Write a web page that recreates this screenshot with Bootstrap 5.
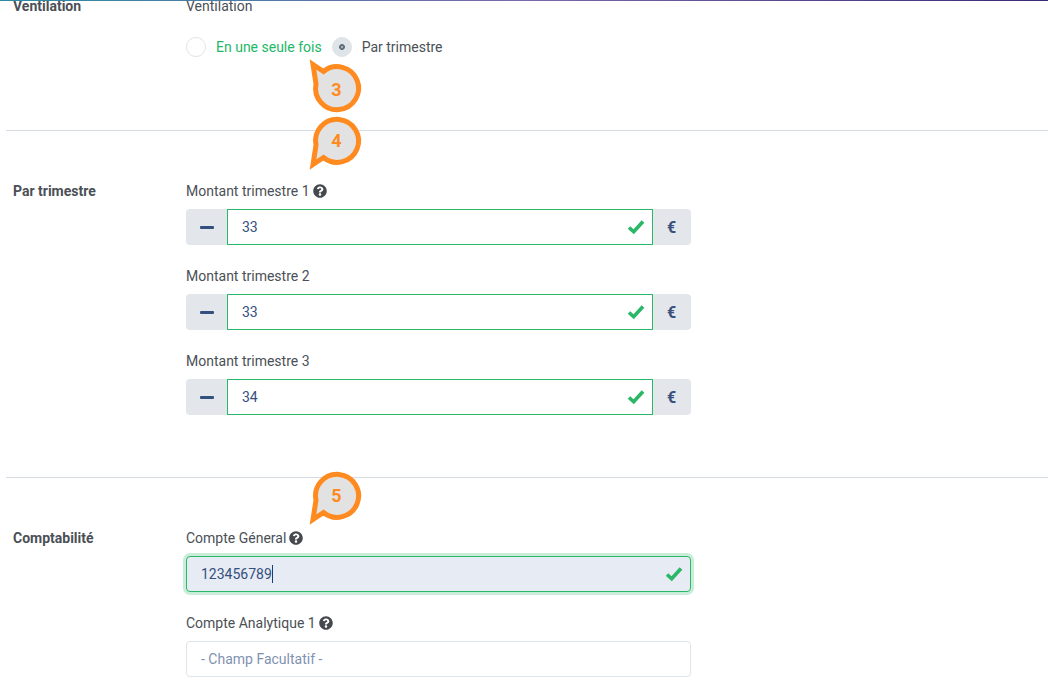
<!doctype html>
<html lang="fr"><head><meta charset="utf-8"><title>Ventilation</title>
<link href="https://cdn.jsdelivr.net/npm/bootstrap@5.3.0/dist/css/bootstrap.min.css" rel="stylesheet">
<style>
html,body{height:680px;overflow:hidden;background:#fff}
body{font-family:Roboto,"Liberation Sans",sans-serif;font-size:14px;color:#4b5056;position:relative}
.topline{height:1px;background:linear-gradient(90deg,#2a8aa0 0,#7a6aa8 50%,#3a2878 100%);position:absolute;left:0;right:0;top:0;z-index:3}
.sheet{padding-left:6px;height:680px;overflow:hidden}
.sect{display:flex;padding-left:7px}
.sect-title{width:173px;flex:none;font-weight:700;line-height:20px;color:#4b5056}
.sect-body{width:505px;flex:none}
.rule{border:0;border-top:1px solid #d5dce3;opacity:1;margin:0}
.s1{height:134px;margin-top:-4px}
.s2{padding-top:50px;height:346px}
.s3{padding-top:50px}
.fld-label{line-height:20px;margin:0 0 8px;display:flex;align-items:center;gap:3px;color:#4b5056}
.qm{width:14px;height:14px;fill:#45494e;flex:none}
.fld{margin-bottom:21px}
.fld .input-group-text{background:#e3e7eb;border:0;justify-content:center;padding:0;height:36px;border-radius:4px}
.minus{width:42px;border-top-right-radius:0!important;border-bottom-right-radius:0!important}
.minus span{display:block;width:14px;height:3px;background:#34507f;border-radius:1px}
.fld .euro{width:39px;font-weight:700;font-size:16px;color:#3d4f7c;padding-top:2px;border-top-left-radius:0!important;border-bottom-left-radius:0!important}
.fld .form-control{height:36px;font-size:14px;color:#34507f;padding:0 14px;font-family:inherit;box-shadow:none}
.fld .form-control.is-valid{border:1px solid #2ab868;background-size:18px 18px;background-position:right 7px center;padding-right:36px;
 background-image:url("data:image/svg+xml,%3Csvg xmlns='http://www.w3.org/2000/svg' viewBox='0 0 18 18'%3E%3Cpath d='M2 9.500l4.700 4.300L16 3.500' fill='none' stroke='%232ab868' stroke-width='3.600'/%3E%3C/svg%3E")}
.input-group .form-control.is-valid{border-radius:0}
.fld .form-control.is-focus{background-color:#e7ebf3;border-radius:4px;box-shadow:0 0 0 3px rgba(42,184,104,.25)}
.fld .form-control.plain{border:1px solid #dde4ea;border-radius:4px}
.fld .form-control.plain::placeholder{color:#7f92b0;opacity:1}
.caret-wrap{position:relative}
.caret-bar{position:absolute;left:86px;top:9px;width:1px;height:18px;background:#1c3d73}
.radios{display:flex;align-items:center;margin-top:20px}
.radios .form-check-input{width:20px;height:20px;margin:0;flex:none;border:1px solid #dde4ea;background-color:#fff}
.radios .form-check-input:checked{background-color:#dfe4e8;border-color:#dfe4e8;background-image:radial-gradient(circle,#a5afb9 0,#a5afb9 .8px,#5f6e7e 1.6px,#5f6e7e 2.6px,transparent 3.2px)}
.radios label{line-height:20px;padding-top:1px}
.lab-on{color:#22b866;margin:0 10px;}
.lab-off{margin-left:10px}
.mark-pin{position:absolute;left:300px;width:66px;height:64px;z-index:2}
.pin3{top:55px}.pin4{top:110px}.pin5{top:465px}
.mark-pin text{font:700 18px Roboto,"Liberation Sans",sans-serif;fill:#ff8a1f;text-anchor:middle}
</style></head>
<body>
<div class="topline"></div>
<main class="sheet">
 <section class="sect s1">
  <div class="sect-title">Ventilation</div>
  <div class="sect-body">
   <div class="fld-label">Ventilation</div>
   <div class="radios">
    <input class="form-check-input" type="radio" name="v" id="r1"><label class="lab-on" for="r1">En une seule fois</label>
    <input class="form-check-input" type="radio" name="v" id="r2" checked><label class="lab-off" for="r2">Par trimestre</label>
   </div>
  </div>
 </section>
 <hr class="rule">
 <section class="sect s2">
  <div class="sect-title">Par trimestre</div>
  <div class="sect-body">
   <div class="fld">
    <div class="fld-label">Montant trimestre 1 <svg class="qm" viewBox="0 0 512 512"><use href="#q"/></svg></div>
    <div class="input-group"><span class="input-group-text minus"><span></span></span><input class="form-control is-valid" value="33"><span class="input-group-text euro">€</span></div>
   </div>
   <div class="fld">
    <div class="fld-label">Montant trimestre 2</div>
    <div class="input-group"><span class="input-group-text minus"><span></span></span><input class="form-control is-valid" value="33"><span class="input-group-text euro">€</span></div>
   </div>
   <div class="fld">
    <div class="fld-label">Montant trimestre 3</div>
    <div class="input-group"><span class="input-group-text minus"><span></span></span><input class="form-control is-valid" value="34"><span class="input-group-text euro">€</span></div>
   </div>
  </div>
 </section>
 <hr class="rule">
 <section class="sect s3">
  <div class="sect-title">Comptabilité</div>
  <div class="sect-body">
   <div class="fld">
    <div class="fld-label">Compte Géneral <svg class="qm" viewBox="0 0 512 512"><use href="#q"/></svg></div>
    <div class="caret-wrap"><input class="form-control is-valid is-focus" value="123456789"><span class="caret-bar"></span></div>
   </div>
   <div class="fld">
    <div class="fld-label">Compte Analytique 1 <svg class="qm" viewBox="0 0 512 512"><use href="#q"/></svg></div>
    <input class="form-control plain" placeholder="- Champ Facultatif -">
   </div>
  </div>
 </section>
</main>
<svg width="0" height="0" class="position-absolute"><defs>
 <path id="q" d="M504 256c0 136.997-111.043 248-248 248S8 392.997 8 256C8 119.083 119.043 8 256 8s248 111.083 248 248zM262.655 90c-54.497 0-89.255 22.957-116.549 63.758-3.536 5.286-2.353 12.415 2.715 16.258l34.699 26.31c5.205 3.947 12.621 3.008 16.665-2.122 17.864-22.658 30.113-35.797 57.303-35.797 20.429 0 45.698 13.148 45.698 32.958 0 14.976-12.363 22.667-32.534 33.976C247.128 238.528 216 254.941 216 296v4c0 6.627 5.373 12 12 12h56c6.627 0 12-5.373 12-12v-1.333c0-28.462 83.186-29.647 83.186-106.667 0-58.002-60.165-102-116.531-102zM256 338c-25.365 0-46 20.635-46 46 0 25.364 20.635 46 46 46s46-20.636 46-46c0-25.365-20.635-46-46-46z"/>
 <path id="bubble" d="M13 9.500L23.500 16.500A21.500 21.500 0 1 1 16 28.900Z" fill="#e2e2e2" stroke="#ff8a1f" stroke-width="5" stroke-linejoin="miter"/>
</defs></svg>
<svg class="mark-pin pin3" viewBox="0 0 66 64"><use href="#bubble"/><text x="36.500" y="40.500">3</text></svg>
<svg class="mark-pin pin4" viewBox="0 0 66 64"><g transform="matrix(1 0 0 -1 0 64)"><use href="#bubble"/></g><text x="36.500" y="37">4</text></svg>
<svg class="mark-pin pin5" viewBox="0 0 66 64"><g transform="matrix(1 0 0 -1 0 64)"><use href="#bubble"/></g><text x="36.500" y="37">5</text></svg>
<script src="https://cdn.jsdelivr.net/npm/bootstrap@5.3.0/dist/js/bootstrap.bundle.min.js"></script>
</body></html>
